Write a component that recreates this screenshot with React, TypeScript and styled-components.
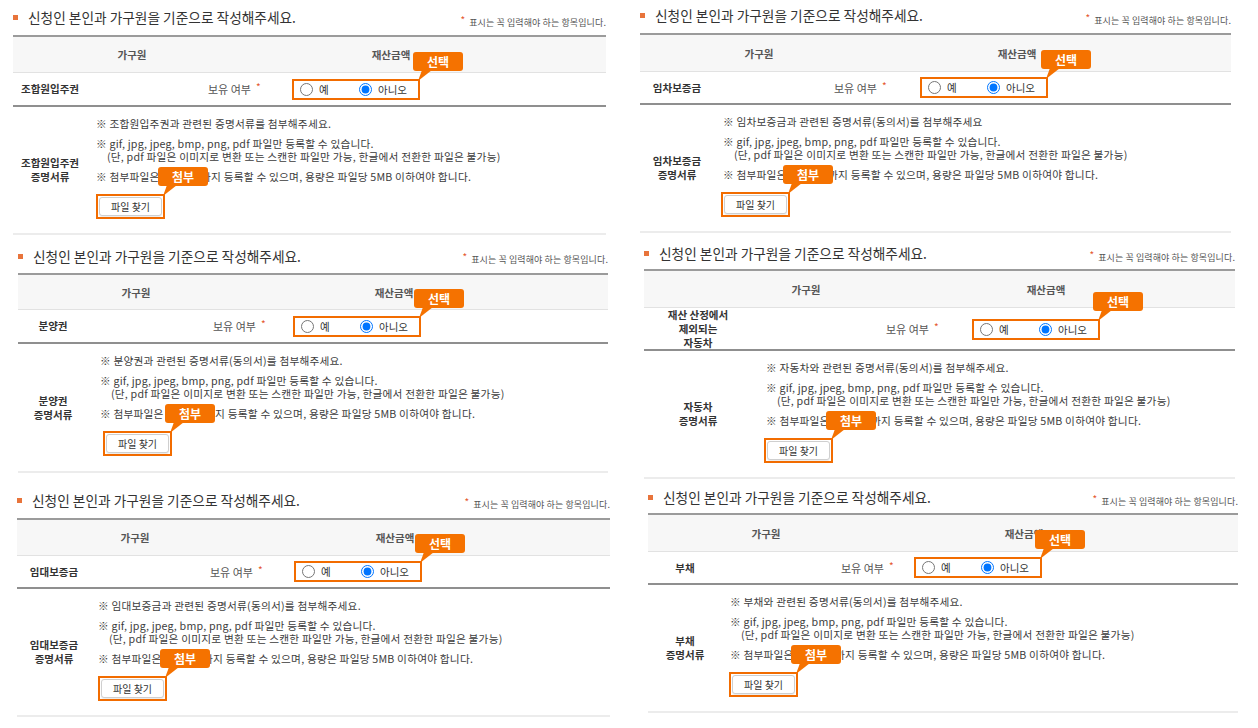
import React from 'react';
import styled, { createGlobalStyle } from 'styled-components';

const ORANGE = '#f26c00';

const GlobalStyle = createGlobalStyle`
  html, body { margin: 0; padding: 0; background: #fff; }
  body {
    font-family: "Noto Sans CJK KR", "Noto Sans", sans-serif;
    color: #333;
    width: 1258px;
    height: 728px;
    overflow: hidden;
  }
  * { box-sizing: border-box; }
`;

type Cfg = {
  id: string;
  x: number;
  w: number;
  titleRowH: number;
  titleTop: number;
  noteTop: number;
  hdrH: number;
  dataH: number;
  proofH: number;
  labelW: number;
  holdStart: number;
  boxStart: number;
  notesStart: number;
  btnStart: number;
  hdrC1: number;
  hdrC2: number;
  label: string[];
  proofLabel: string[];
  firstNote: string;
};

const Page = styled.div`
  display: grid;
  grid-template-columns: 620px 638px;
  align-items: start;
`;

const Column = styled.div`
  display: flex;
  flex-direction: column;
`;

const Panel = styled.section<{ $ml: number; $w: number }>`
  margin-left: ${(p) => p.$ml}px;
  width: ${(p) => p.$w}px;
`;

const TitleRow = styled.div<{ $h: number }>`
  height: ${(p) => p.$h}px;
  display: flex;
  justify-content: space-between;
  align-items: flex-start;
`;

const Title = styled.h2<{ $top: number }>`
  margin: ${(p) => p.$top}px 0 0 0;
  font-size: 13.7px;
  line-height: 18px;
  font-weight: 400;
  color: #333;
  display: flex;
  align-items: center;
`;

const Bullet = styled.span`
  display: inline-block;
  width: 5px;
  height: 5px;
  background: #e8743b;
  margin-right: 10px;
`;

const Required = styled.p<{ $top: number }>`
  margin: ${(p) => p.$top}px 0 0 0;
  font-size: 9px;
  line-height: 12px;
  color: #555;
  letter-spacing: 0.1px;
`;

const Star = styled.span`
  color: #e4572e;
  font-size: 10px;
  margin-right: 4px;
  position: relative;
  top: -2px;
`;

const Table = styled.div`
  border-top: 2px solid #9b9b9b;
`;

const HeaderRow = styled.div<{ $h: number; $c1: number; $c2: number }>`
  display: grid;
  grid-template-columns: ${(p) => p.$c1 * 2}px ${(p) => (p.$c2 - p.$c1 * 2) * 2}px 1fr;
  align-items: center;
  height: ${(p) => p.$h}px;
  background: #f7f7f7;
  border-bottom: 1px solid #e2e2e2;
`;

const HeadCell = styled.div`
  text-align: center;
  font-size: 10.5px;
  font-weight: 700;
  color: #555;
`;

const DataRow = styled.div<{ $h: number; $lw: number; $bs: number }>`
  display: grid;
  grid-template-columns: ${(p) => p.$lw}px ${(p) => p.$bs - p.$lw}px 1fr;
  align-items: center;
  height: ${(p) => p.$h}px;
  border-bottom: 2px solid #8f8f8f;
`;

const LabelCell = styled.div`
  text-align: center;
  font-size: 10.5px;
  line-height: 14px;
  font-weight: 700;
  color: #333;
  align-self: center;
`;

const HoldCell = styled.div<{ $pl: number }>`
  padding-left: ${(p) => p.$pl}px;
  font-size: 11px;
  color: #555;
  white-space: nowrap;
`;

const HoldStar = styled.span`
  color: #e4572e;
  font-size: 10px;
  margin-left: 5px;
  position: relative;
  top: -3px;
`;

const RadioBox = styled.div`
  position: relative;
  display: flex;
  align-items: center;
  width: 128px;
  height: 21px;
  border: 2px solid ${ORANGE};
  padding-left: 6px;
`;

const Option = styled.label<{ $w?: number }>`
  display: flex;
  align-items: center;
  gap: 6px;
  width: ${(p) => (p.$w ? `${p.$w}px` : 'auto')};
  font-size: 10.5px;
  color: #333;
`;

const Radio = styled.input`
  margin: 0;
  width: 13px;
  height: 13px;
  accent-color: #0075ff;
`;

const Callout = styled.div`
  position: absolute;
  left: calc(100% - 5px);
  bottom: calc(100% + 10px);
  width: 50px;
  height: 19px;
  background: #f57200;
  border-radius: 3px;
  color: #fff;
  font-size: 12px;
  font-weight: 700;
  line-height: 19px;
  letter-spacing: 0;
  text-align: center;
  z-index: 2;
`;

const Tail = styled.svg`
  position: absolute;
  left: 5px;
  top: 18px;
`;

const ProofRow = styled.div<{ $h: number; $lw: number }>`
  display: grid;
  grid-template-columns: ${(p) => p.$lw}px 1fr;
  height: ${(p) => p.$h}px;
  border-bottom: 2px solid #ececec;
`;

const Notes = styled.div<{ $pl: number }>`
  padding-left: ${(p) => p.$pl}px;
  padding-top: 10px;
  font-size: 10.7px;
  line-height: 13px;
  letter-spacing: 0.2px;
  color: #3c3c3c;
  white-space: nowrap;
`;

const Note = styled.p`
  margin: 0 0 7px 0;
`;

const Indent = styled.span`
  padding-left: 11px;
`;

const ButtonWrap = styled.div<{ $ml: number }>`
  position: relative;
  display: inline-block;
  margin-left: ${(p) => p.$ml}px;
  margin-top: 4px;
  border: 2px solid ${ORANGE};
  padding: 1px;
`;

const FileButton = styled.button`
  display: block;
  height: 19px;
  padding: 0 11px;
  border: 1px solid #cfcfcf;
  border-radius: 3px;
  background: #fff;
  box-shadow: 0 1px 1px rgba(0, 0, 0, 0.08);
  font-family: "Noto Sans CJK KR", "Noto Sans", sans-serif;
  font-size: 10px;
  color: #333;
  line-height: 17px;
  letter-spacing: 0;
`;

const CalloutTail = () => (
  <Tail width="14" height="11" viewBox="0 0 14 11">
    <polygon points="4,0 14,0 0,11" fill="#f57200" />
  </Tail>
);

const panelsLeft: Cfg[] = [
  {
    id: 'l1', x: 13, w: 593, titleRowH: 35, titleTop: 8, noteTop: 16,
    hdrH: 36, dataH: 34, proofH: 128, labelW: 74, holdStart: 195, boxStart: 279,
    notesStart: 83, btnStart: 83, hdrC1: 119, hdrC2: 378,
    label: ['조합원입주권'], proofLabel: ['조합원입주권', '증명서류'],
    firstNote: '※ 조합원입주권과 관련된 증명서류를 첨부해주세요.',
  },
  {
    id: 'l2', x: 18, w: 590, titleRowH: 38, titleTop: 12, noteTop: 18,
    hdrH: 35, dataH: 34, proofH: 129, labelW: 70, holdStart: 195, boxStart: 275,
    notesStart: 82, btnStart: 85, hdrC1: 118, hdrC2: 376,
    label: ['분양권'], proofLabel: ['분양권', '증명서류'],
    firstNote: '※ 분양권과 관련된 증명서류(동의서)를 첨부해주세요.',
  },
  {
    id: 'l3', x: 17, w: 593, titleRowH: 45, titleTop: 18, noteTop: 25,
    hdrH: 36, dataH: 33, proofH: 128, labelW: 74, holdStart: 193, boxStart: 277,
    notesStart: 81, btnStart: 81, hdrC1: 118, hdrC2: 378,
    label: ['임대보증금'], proofLabel: ['임대보증금', '증명서류'],
    firstNote: '※ 임대보증금과 관련된 증명서류(동의서)를 첨부해주세요.',
  },
];

const panelsRight: Cfg[] = [
  {
    id: 'r1', x: 640, w: 591, titleRowH: 33, titleTop: 6, noteTop: 14,
    hdrH: 37, dataH: 33, proofH: 128, labelW: 74, holdStart: 194, boxStart: 280,
    notesStart: 83, btnStart: 81, hdrC1: 119, hdrC2: 377,
    label: ['임차보증금'], proofLabel: ['임차보증금', '증명서류'],
    firstNote: '※ 임차보증금과 관련된 증명서류(동의서)를 첨부해주세요',
  },
  {
    id: 'r2', x: 644, w: 591, titleRowH: 36, titleTop: 11, noteTop: 18,
    hdrH: 37, dataH: 43, proofH: 128, labelW: 108, holdStart: 242, boxStart: 328,
    notesStart: 122, btnStart: 120, hdrC1: 162, hdrC2: 402,
    label: ['재산 산정에서', '제외되는', '자동차'], proofLabel: ['자동차', '증명서류'],
    firstNote: '※ 자동차와 관련된 증명서류(동의서)를 첨부해주세요.',
  },
  {
    id: 'r3', x: 648, w: 590, titleRowH: 34, titleTop: 9, noteTop: 16,
    hdrH: 37, dataH: 33, proofH: 128, labelW: 74, holdStart: 193, boxStart: 266,
    notesStart: 82, btnStart: 81, hdrC1: 118, hdrC2: 376,
    label: ['부채'], proofLabel: ['부채', '증명서류'],
    firstNote: '※ 부채와 관련된 증명서류(동의서)를 첨부해주세요.',
  },
];

const Lines = ({ lines }: { lines: string[] }) => (
  <>
    {lines.map((l, i) => (
      <div key={i}>{l}</div>
    ))}
  </>
);

const AssetPanel = ({ c, colStart }: { c: Cfg; colStart: number }) => (
  <Panel $ml={c.x - colStart} $w={c.w}>
    <TitleRow $h={c.titleRowH}>
      <Title $top={c.titleTop}>
        <Bullet />
        신청인 본인과 가구원을 기준으로 작성해주세요.
      </Title>
      <Required $top={c.noteTop}>
        <Star>*</Star>표시는 꼭 입력해야 하는 항목입니다.
      </Required>
    </TitleRow>
    <Table>
      <HeaderRow $h={c.hdrH} $c1={c.hdrC1} $c2={c.hdrC2}>
        <HeadCell>가구원</HeadCell>
        <HeadCell>재산금액</HeadCell>
        <div />
      </HeaderRow>
      <DataRow $h={c.dataH} $lw={c.labelW} $bs={c.boxStart}>
        <LabelCell>
          <Lines lines={c.label} />
        </LabelCell>
        <HoldCell $pl={c.holdStart - c.labelW}>
          보유 여부<HoldStar>*</HoldStar>
        </HoldCell>
        <div>
          <RadioBox>
            <Option $w={59}>
              <Radio type="radio" name={c.id} />예
            </Option>
            <Option>
              <Radio type="radio" name={c.id} defaultChecked />아니오
            </Option>
            <Callout>
              선택
              <CalloutTail />
            </Callout>
          </RadioBox>
        </div>
      </DataRow>
      <ProofRow $h={c.proofH} $lw={c.labelW}>
        <LabelCell>
          <Lines lines={c.proofLabel} />
        </LabelCell>
        <Notes $pl={c.notesStart - c.labelW}>
          <Note>{c.firstNote}</Note>
          <Note>
            ※ gif, jpg, jpeg, bmp, png, pdf 파일만 등록할 수 있습니다.
            <br />
            <Indent>(단, pdf 파일은 이미지로 변환 또는 스캔한 파일만 가능, 한글에서 전환한 파일은 불가능)</Indent>
          </Note>
          <Note>※ 첨부파일은 최대 5개까지 등록할 수 있으며, 용량은 파일당 5MB 이하여야 합니다.</Note>
          <ButtonWrap $ml={c.btnStart - c.notesStart}>
            <FileButton type="button">파일 찾기</FileButton>
            <Callout>
              첨부
              <CalloutTail />
            </Callout>
          </ButtonWrap>
        </Notes>
      </ProofRow>
    </Table>
  </Panel>
);

export default function App() {
  return (
    <>
      <GlobalStyle />
      <Page>
        <Column>
          {panelsLeft.map((c) => (
            <AssetPanel key={c.id} c={c} colStart={0} />
          ))}
        </Column>
        <Column>
          {panelsRight.map((c) => (
            <AssetPanel key={c.id} c={c} colStart={620} />
          ))}
        </Column>
      </Page>
    </>
  );
}
